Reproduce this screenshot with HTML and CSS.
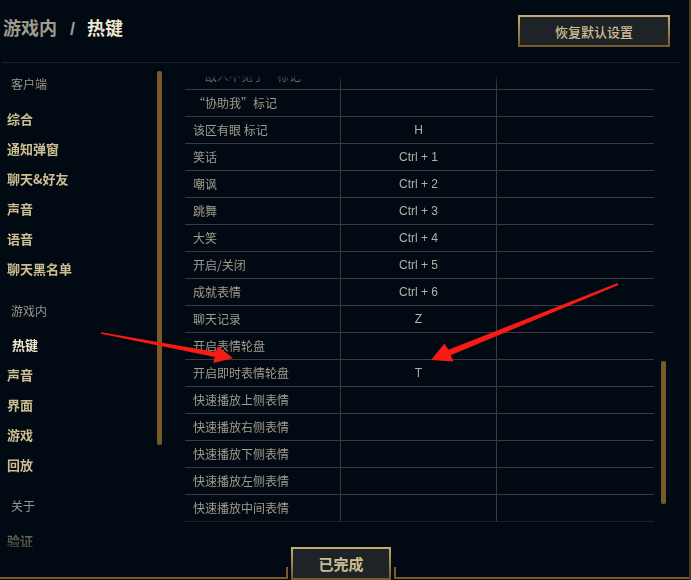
FILE: index.html
```html
<!DOCTYPE html>
<html lang="zh-CN">
<head>
<meta charset="utf-8">
<title>游戏内 / 热键</title>
<link rel="stylesheet" href="styles.css">
</head>
<body>
<div class="app">
  <header class="header">
    <h1 class="title"><span class="crumb">游戏内</span><span class="sep">/</span><span class="current">热键</span></h1>
    <button class="btn-reset">恢复默认设置</button>
  </header>
  <div class="main">
    <aside class="sidebar">
      <nav class="nav">
        <div class="label">客户端</div>
        <div class="item">综合</div>
        <div class="item">通知弹窗</div>
        <div class="item">聊天&amp;好友</div>
        <div class="item">声音</div>
        <div class="item">语音</div>
        <div class="item">聊天黑名单</div>
        <div class="label section">游戏内</div>
        <div class="item active">热键</div>
        <div class="item">声音</div>
        <div class="item">界面</div>
        <div class="item">游戏</div>
        <div class="item">回放</div>
        <div class="label section2">关于</div>
        <div class="item">验证</div>
      </nav>
      <div class="thumb thumb-left"></div>
    </aside>
    <section class="content">
      <div class="viewport">
        <div class="table">
          <div class="row"><div class="cell">“敌人不见了”标记</div><div class="cell key"></div><div class="cell"></div></div>
          <div class="row"><div class="cell">“协助我”标记</div><div class="cell key"></div><div class="cell"></div></div>
          <div class="row"><div class="cell">该区有眼 标记</div><div class="cell key">H</div><div class="cell"></div></div>
          <div class="row"><div class="cell">笑话</div><div class="cell key">Ctrl + 1</div><div class="cell"></div></div>
          <div class="row"><div class="cell">嘲讽</div><div class="cell key">Ctrl + 2</div><div class="cell"></div></div>
          <div class="row"><div class="cell">跳舞</div><div class="cell key">Ctrl + 3</div><div class="cell"></div></div>
          <div class="row"><div class="cell">大笑</div><div class="cell key">Ctrl + 4</div><div class="cell"></div></div>
          <div class="row"><div class="cell">开启/关闭</div><div class="cell key">Ctrl + 5</div><div class="cell"></div></div>
          <div class="row"><div class="cell">成就表情</div><div class="cell key">Ctrl + 6</div><div class="cell"></div></div>
          <div class="row"><div class="cell">聊天记录</div><div class="cell key">Z</div><div class="cell"></div></div>
          <div class="row"><div class="cell">开启表情轮盘</div><div class="cell key"></div><div class="cell"></div></div>
          <div class="row"><div class="cell">开启即时表情轮盘</div><div class="cell key">T</div><div class="cell"></div></div>
          <div class="row"><div class="cell">快速播放上侧表情</div><div class="cell key"></div><div class="cell"></div></div>
          <div class="row"><div class="cell">快速播放右侧表情</div><div class="cell key"></div><div class="cell"></div></div>
          <div class="row"><div class="cell">快速播放下侧表情</div><div class="cell key"></div><div class="cell"></div></div>
          <div class="row"><div class="cell">快速播放左侧表情</div><div class="cell key"></div><div class="cell"></div></div>
          <div class="row"><div class="cell">快速播放中间表情</div><div class="cell key"></div><div class="cell"></div></div>
        </div>
      </div>
      <div class="thumb thumb-right"></div>
    </section>
  </div>
  <footer class="footer">
    <div class="rail rail-left"></div>
    <button class="btn-done">已完成</button>
    <div class="rail rail-right"></div>
  </footer>
  <svg class="arrows" width="691" height="580" viewBox="0 0 691 580">
    <polygon fill="#fa1a14" points="101.1,332.3 215.8,352.1 217.5,346.2 233,358 213.3,363 214.8,357.1 100.9,333.7"/>
    <polygon fill="#fa1a14" points="617.6,283.1 448.4,349.7 444.5,343.5 431,360 453.5,361.5 450.6,355.3 618.4,284.9"/>
  </svg>
</div>
</body>
</html>
```
FILE: styles.css
```css
* { box-sizing: border-box; }
html, body {
  margin: 0;
  padding: 0;
  background: #010a13;
  width: 691px;
  height: 580px;
  overflow: hidden;
}
body {
  font-family: "Liberation Sans", "Noto Sans CJK SC", sans-serif;
}
.app {
  position: relative;
  width: 691px;
  height: 580px;
  border-right: 2px solid #4a3a18;
  display: flex;
  flex-direction: column;
}
.header {
  height: 63px;
  flex: none;
  display: flex;
  justify-content: space-between;
  align-items: flex-start;
  margin: 0 9px 0 2px;
  border-bottom: 1px solid #1e2328;
}
.title {
  margin: 18px 0 0 1px;
  font-size: 18px;
  line-height: 22px;
  font-weight: 700;
  color: #a09b8c;
  display: flex;
}
.title .sep { margin: 0 12px 0 13px; }
.title .current { color: #f0e6d2; }
.btn-reset {
  margin: 15px 10px 0 0;
  width: 152px;
  height: 32px;
  background: #1e2328;
  border: 2px solid #a4874e;
  border-image: linear-gradient(180deg, #c8aa6e, #785a28) 1;
  color: #cdbe91;
  font-family: "Noto Sans CJK SC", sans-serif;
  font-size: 13px;
  font-weight: 500;
  padding: 0;
}
.main {
  flex: 1;
  display: flex;
  min-height: 0;
}
.sidebar {
  width: 185px;
  flex: none;
  display: flex;
}
.nav {
  width: 157px;
  padding-top: 6px;
  display: flex;
  flex-direction: column;
  -webkit-mask-image: linear-gradient(180deg, #000 0, #000 450px, rgba(0,0,0,0.3) 484px);
  mask-image: linear-gradient(180deg, #000 0, #000 450px, rgba(0,0,0,0.3) 484px);
}
.label {
  height: 30px;
  line-height: 30px;
  padding-left: 11px;
  font-family: "Noto Sans CJK SC", sans-serif;
  font-size: 12px;
  color: #9a968a;
  margin-bottom: 5px;
}
.label.section { margin-top: 12px; margin-bottom: 4px; }
.label.section2 { margin-top: 11px; }
.item {
  height: 30px;
  line-height: 30px;
  padding-left: 7px;
  font-family: "Noto Sans CJK SC", sans-serif;
  font-size: 13px;
  font-weight: 700;
  color: #cdbe91;
}
.item.active { color: #f0e6d2; padding-left: 12px; }
.thumb {
  width: 5px;
  background: #785a28;
  border-radius: 2px;
  flex: none;
}
.thumb-left { margin-top: 8px; height: 374px; }
.content {
  flex: 1;
  display: flex;
  align-items: flex-start;
}
.viewport {
  width: 469px;
  height: 484px;
  overflow: hidden;
  -webkit-mask-image: linear-gradient(180deg, transparent 0, transparent 12px, rgba(0,0,0,0.6) 17px, #000 24px);
  mask-image: linear-gradient(180deg, transparent 0, transparent 12px, rgba(0,0,0,0.6) 17px, #000 24px);
}
.table { display: flex; flex-direction: column; }
.row {
  display: grid;
  grid-template-columns: 156px 156px 157px;
  height: 27px;
  border-bottom: 1px solid #3a3b40;
}
.row:last-child { border-bottom-color: #1e2328; }
.cell {
  font-family: "Noto Sans CJK SC", sans-serif;
  font-size: 12px;
  line-height: 26px;
  color: #a09b8c;
  padding-left: 8px;
  white-space: nowrap;
  border-right: 1px solid #3a3b40;
}
.cell:last-child { border-right: none; }
.cell.key {
  padding-left: 0;
  text-align: center;
  font-family: "Liberation Sans", "Noto Sans CJK SC", sans-serif;
  color: #b4b0a4;
}
.thumb-right { margin: 298px 0 0 7px; height: 143px; }
.footer {
  height: 33px;
  flex: none;
  display: flex;
  align-items: flex-end;
  padding-bottom: 1px;
}
.rail {
  height: 12px;
  border-bottom: 2px solid #785a28;
}
.rail-left { width: 288px; flex: none; border-right: 2px solid #785a28; margin-right: 3px; }
.rail-right { flex: 1; border-left: 2px solid #785a28; margin-left: 3px; }
.btn-done {
  width: 100px;
  height: 33px;
  margin-bottom: -1px;
  background: #1e2328;
  border: 2px solid #a98c52;
  border-image: linear-gradient(180deg, #c8aa6e, #785a28) 1;
  color: #cdbe91;
  font-family: "Noto Sans CJK SC", sans-serif;
  font-size: 15px;
  font-weight: 700;
  padding: 0;
}
.arrows {
  position: absolute;
  left: 0;
  top: 0;
  pointer-events: none;
}
```
